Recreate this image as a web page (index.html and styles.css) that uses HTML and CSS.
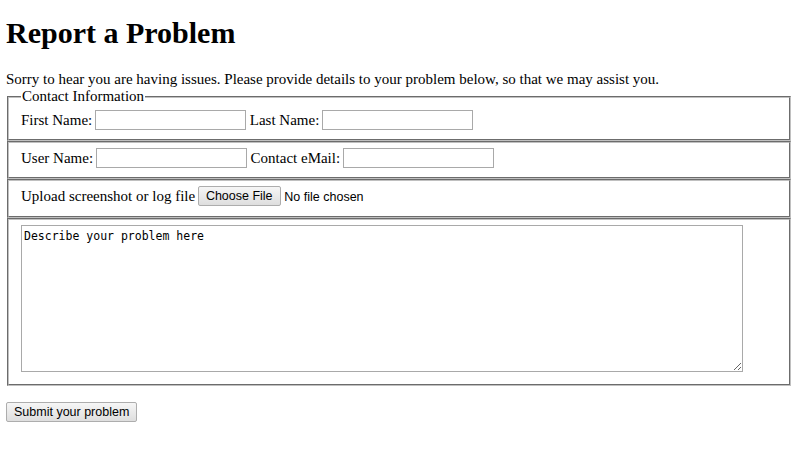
FILE: index.html
```html
<!DOCTYPE html>
<html>
<head>
<meta charset="utf-8">
<title>Report a Problem</title>
<link rel="stylesheet" href="styles.css">
</head>
<body>
<h1 class="title">Report a Problem</h1>
<div class="intro">Sorry to hear you are having issues. Please provide details to your problem below, so that we may assist you.</div>
<form class="report">
  <fieldset class="group">
    <legend class="legend">Contact Information</legend>
    First Name: <input class="field" type="text">
    Last Name: <input class="field" type="text">
  </fieldset>
  <fieldset class="group">
    User Name: <input class="field" type="text">
    Contact eMail: <input class="field" type="text">
  </fieldset>
  <fieldset class="group">
    Upload screenshot or log file <span class="btn">Choose File</span> <span class="file-name">No file chosen</span>
  </fieldset>
  <fieldset class="group group-text">
    <textarea class="problem">Describe your problem here</textarea>
  </fieldset>
  <br>
  <button class="btn submit" type="button">Submit your problem</button>
</form>
</body>
</html>
```

FILE: styles.css
```css
html, body {
  background: #fff;
}
body {
  margin: 0;
  padding: 6px;
  font-family: "Liberation Serif", "Times New Roman", serif;
  font-size: 15px;
  line-height: 17px;
  color: #000;
}
.title {
  font-size: 30px;
  line-height: 34px;
  font-weight: bold;
  margin: 10px 0 21px;
}
.intro {
  line-height: 17px;
}
.report {
  margin: 0;
  line-height: 16px;
}
.group {
  margin: 0 -3px 0 1px;
  border: 2px groove #c0c0c0;
  padding: 5px 12px 9px;
  line-height: 20px;
  min-width: 0;
}
.legend {
  padding: 0 1px;
  line-height: 17px;
}
.field {
  width: 151px;
  height: 20px;
  box-sizing: border-box;
  border: 1px solid #a9a9a9;
  padding: 1px 2px;
  font-family: "Liberation Sans", Arial, sans-serif;
  font-size: 12.5px;
  vertical-align: top;
  margin: 0 0 0 -1px;
  background: #fff;
}
.file-name {
  font-family: "Liberation Sans", Arial, sans-serif;
  font-size: 12.5px;
}
.btn {
  display: inline-block;
  box-sizing: border-box;
  height: 20px;
  vertical-align: top;
  font-family: "Liberation Sans", Arial, sans-serif;
  font-size: 12.5px;
  line-height: 18px;
  padding: 0 7px;
  margin-left: -1px;
  border: 1px solid #adadad;
  border-radius: 2px;
  background: linear-gradient(#f6f6f6, #dedede);
  color: #000;
}
.group-text {
  padding-bottom: 12px;
}
.problem {
  display: block;
  width: 722px;
  height: 147px;
  box-sizing: border-box;
  border: 1px solid #a9a9a9;
  font-family: "DejaVu Sans Mono", monospace;
  font-size: 11.5px;
  line-height: 14px;
  padding: 3px 2px;
  margin: 0;
  resize: both;
}
.submit {
  margin: 0;
  cursor: default;
}
```
